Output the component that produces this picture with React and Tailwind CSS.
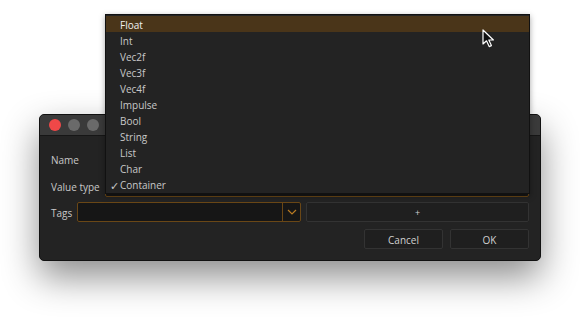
import React from "react";

const types = ["Float", "Int", "Vec2f", "Vec3f", "Vec4f", "Impulse", "Bool", "String", "List", "Char", "Container"];

function Cursor() {
  return (
    <svg width="14" height="20" viewBox="0 0 14 20" className="absolute left-[482px] top-[29px]">
      <path d="M1 1 L1 15 L4.5 11.8 L7.2 17.6 L9.4 16.6 L6.8 11 L11.4 11 Z" fill="#111" stroke="#fff" strokeWidth="1.2" strokeLinejoin="round" />
    </svg>
  );
}

function TypePopup({ selected, current }) {
  return (
    <div className="absolute left-[105px] top-[14px] w-[425px] h-[180px] bg-[#232323] border border-[#111] shadow-[0_2px_6px_rgba(0,0,0,0.35)] pt-[1px]">
      {types.map((t) => (
        <div
          key={t}
          className={
            "h-[16px] flex items-center pt-[2px] text-[10px] leading-none " +
            (t === selected ? "bg-[#4a3519] text-[#f0f0f0]" : "text-[#c8c8c8]")
          }
        >
          <span className="w-[14px] pl-[4px] text-[11px]">{t === current ? "✓" : ""}</span>
          {t}
        </div>
      ))}
    </div>
  );
}

export default function App() {
  return (
    <div className="relative w-[580px] h-[320px] bg-white overflow-hidden" style={{ fontFamily: '"Open Sans", "DejaVu Sans", sans-serif' }}>
      <div className="pt-[114px] pl-[39px]">
        <div className="w-[502px] rounded-[5px] border border-[#111] bg-[#232323] shadow-[0_16px_36px_rgba(0,0,0,0.45)] overflow-hidden">
          <div className="h-[21px] bg-[#3a3a3a] border-b border-[#161616] flex items-center gap-[7px] pl-[9px]">
            <span className="w-[12px] h-[12px] rounded-full bg-[#f04848]" />
            <span className="w-[12px] h-[12px] rounded-full bg-[#6a6a6a]" />
            <span className="w-[12px] h-[12px] rounded-full bg-[#6a6a6a]" />
          </div>
          <div className="px-[11px] pt-[13px] pb-[11px] text-[10px] text-[#c8c8c8]">
            <div className="flex items-center h-[20px] pt-[2px]">
              <span className="w-[54px]">Name</span>
              <div className="ml-auto w-[424px] h-[20px] bg-[#161616] border border-[#3a3a3a] rounded-[2px]" />
            </div>
            <div className="flex items-center h-[20px] mt-[7px] pt-[2px]">
              <span className="w-[54px]">Value type</span>
              <div className="ml-auto w-[424px] h-[20px] bg-[#161616] border border-[#6a4716] rounded-[2px]" />
            </div>
            <div className="flex items-center h-[20px] mt-[6px] gap-[5px]">
              <span className="w-[21px] pt-[2px]">Tags</span>
              <div className="flex w-[224px] h-[20px] bg-[#161616] border border-[#6a4716] rounded-[2px]">
                <div className="flex-1" />
                <div className="w-[18px] border-l border-[#6a4716] flex items-center justify-center">
                  <svg width="10" height="6" viewBox="0 0 10 6">
                    <path d="M1 1 L5 5 L9 1" fill="none" stroke="#b87a22" strokeWidth="1.2" />
                  </svg>
                </div>
              </div>
              <button className="flex-1 h-[20px] bg-[#1f1f1f] border border-[#333] rounded-[2px] text-[#d0d0d0] text-[9px] leading-none">+</button>
            </div>
            <div className="flex justify-end gap-[7px] mt-[7px]">
              <button className="w-[79px] h-[20px] pt-[2px] bg-[#1f1f1f] border border-[#333] rounded-[2px] text-[#d0d0d0] text-[10px] leading-none">Cancel</button>
              <button className="w-[79px] h-[20px] pt-[2px] bg-[#1f1f1f] border border-[#333] rounded-[2px] text-[#d0d0d0] text-[10px] leading-none">OK</button>
            </div>
          </div>
        </div>
      </div>
      <TypePopup selected="Float" current="Container" />
      <Cursor />
    </div>
  );
}
